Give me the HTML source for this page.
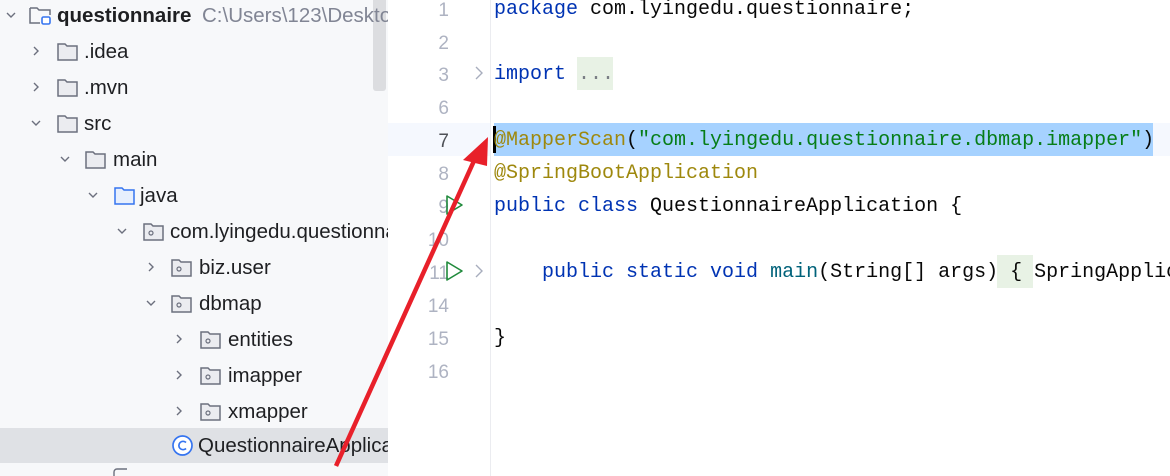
<!DOCTYPE html>
<html><head><meta charset="utf-8"><style>
*{margin:0;padding:0;box-sizing:border-box}
body{width:1170px;height:476px;overflow:hidden;background:#fff;position:relative;font-family:"Liberation Sans",sans-serif}
#tree{position:absolute;left:0;top:0;width:388px;height:476px;background:#f7f8fa;overflow:hidden}
.row{position:absolute;left:0;width:388px;height:36px;font-size:20.5px;color:#1e1f22;white-space:nowrap}
.row span.t{position:absolute;top:7px}
.chev{position:absolute;top:11px;width:14px;height:14px}
.ic{position:absolute;top:8px}
#scroll{position:absolute;left:373px;top:0;width:13px;height:91px;background:#dcdde0;border-radius:0 0 3px 3px}
#clip{position:absolute;left:0;top:0;width:1170px;height:476px;overflow:hidden}
.ln{position:absolute;left:388px;width:61px;text-align:right;font-family:"Liberation Sans",sans-serif;font-size:19px;color:#aeb3c2}
.code{position:absolute;left:494px;font-family:"Liberation Mono",monospace;font-size:20px;white-space:pre;color:#080808;line-height:22px}
.kw{color:#0033b3}.an{color:#9e880d}.st{color:#067d17}
</style></head><body>
<div id="clip">
<div id="tree">
<div id="scroll"></div>
<div class="row" style="top:-3px">
 <svg class="chev" style="left:4px" viewBox="0 0 14 14"><path d="M3 5l4 4 4-4" fill="none" stroke="#6c707e" stroke-width="1.4"/></svg>
 <svg class="ic" style="left:28px;top:7px" width="26" height="24" viewBox="0 0 26 24"><path d="M2 4h7l2 2h11v5M2 4v15h10" fill="none" stroke="#6c707e" stroke-width="1.5"/><rect x="14" y="13" width="8" height="7" rx="1.5" fill="#fff" stroke="#3574f0" stroke-width="1.6"/></svg>
 <span class="t" style="left:57px;font-weight:bold">questionnaire</span><span class="t" style="left:202px;color:#818594">C:\Users\123\Desktop</span></div>
<div class="row" style="top:33px">
 <svg class="chev" style="left:29px" viewBox="0 0 14 14"><path d="M5 3l4 4-4 4" fill="none" stroke="#6c707e" stroke-width="1.4"/></svg>
 <svg class="ic" style="left:56px" width="24" height="22" viewBox="0 0 24 22"><path d="M2 3h7l2 2h10v14H2z" fill="#ebecf0" stroke="#6c707e" stroke-width="1.5"/></svg><span class="t" style="left:84px">.idea</span></div>
<div class="row" style="top:69px">
 <svg class="chev" style="left:29px" viewBox="0 0 14 14"><path d="M5 3l4 4-4 4" fill="none" stroke="#6c707e" stroke-width="1.4"/></svg>
 <svg class="ic" style="left:56px" width="24" height="22" viewBox="0 0 24 22"><path d="M2 3h7l2 2h10v14H2z" fill="#ebecf0" stroke="#6c707e" stroke-width="1.5"/></svg><span class="t" style="left:84px">.mvn</span></div>
<div class="row" style="top:105px">
 <svg class="chev" style="left:29px" viewBox="0 0 14 14"><path d="M3 5l4 4 4-4" fill="none" stroke="#6c707e" stroke-width="1.4"/></svg>
 <svg class="ic" style="left:56px" width="24" height="22" viewBox="0 0 24 22"><path d="M2 3h7l2 2h10v14H2z" fill="#ebecf0" stroke="#6c707e" stroke-width="1.5"/></svg><span class="t" style="left:84px">src</span></div>
<div class="row" style="top:141px">
 <svg class="chev" style="left:58px" viewBox="0 0 14 14"><path d="M3 5l4 4 4-4" fill="none" stroke="#6c707e" stroke-width="1.4"/></svg>
 <svg class="ic" style="left:84px" width="24" height="22" viewBox="0 0 24 22"><path d="M2 3h7l2 2h10v14H2z" fill="#ebecf0" stroke="#6c707e" stroke-width="1.5"/></svg><span class="t" style="left:113px">main</span></div>
<div class="row" style="top:177px">
 <svg class="chev" style="left:86px" viewBox="0 0 14 14"><path d="M3 5l4 4 4-4" fill="none" stroke="#6c707e" stroke-width="1.4"/></svg>
 <svg class="ic" style="left:113px" width="24" height="22" viewBox="0 0 24 22"><path d="M2 3h7l2 2h10v14H2z" fill="#e7effd" stroke="#3574f0" stroke-width="1.5"/></svg><span class="t" style="left:140px">java</span></div>
<div class="row" style="top:213px">
 <svg class="chev" style="left:115px" viewBox="0 0 14 14"><path d="M3 5l4 4 4-4" fill="none" stroke="#6c707e" stroke-width="1.4"/></svg>
 <svg class="ic" style="left:142px" width="24" height="22" viewBox="0 0 24 22"><path d="M2 3h7l2 2h10v14H2z" fill="#ebecf0" stroke="#6c707e" stroke-width="1.5"/><circle cx="9" cy="12" r="2" fill="none" stroke="#6c707e" stroke-width="1.2"/></svg><span class="t" style="left:170px">com.lyingedu.questionnaire</span></div>
<div class="row" style="top:249px">
 <svg class="chev" style="left:144px" viewBox="0 0 14 14"><path d="M5 3l4 4-4 4" fill="none" stroke="#6c707e" stroke-width="1.4"/></svg>
 <svg class="ic" style="left:170px" width="24" height="22" viewBox="0 0 24 22"><path d="M2 3h7l2 2h10v14H2z" fill="#ebecf0" stroke="#6c707e" stroke-width="1.5"/><circle cx="9" cy="12" r="2" fill="none" stroke="#6c707e" stroke-width="1.2"/></svg><span class="t" style="left:199px">biz.user</span></div>
<div class="row" style="top:285px">
 <svg class="chev" style="left:144px" viewBox="0 0 14 14"><path d="M3 5l4 4 4-4" fill="none" stroke="#6c707e" stroke-width="1.4"/></svg>
 <svg class="ic" style="left:170px" width="24" height="22" viewBox="0 0 24 22"><path d="M2 3h7l2 2h10v14H2z" fill="#ebecf0" stroke="#6c707e" stroke-width="1.5"/><circle cx="9" cy="12" r="2" fill="none" stroke="#6c707e" stroke-width="1.2"/></svg><span class="t" style="left:199px">dbmap</span></div>
<div class="row" style="top:321px">
 <svg class="chev" style="left:172px" viewBox="0 0 14 14"><path d="M5 3l4 4-4 4" fill="none" stroke="#6c707e" stroke-width="1.4"/></svg>
 <svg class="ic" style="left:199px" width="24" height="22" viewBox="0 0 24 22"><path d="M2 3h7l2 2h10v14H2z" fill="#ebecf0" stroke="#6c707e" stroke-width="1.5"/><circle cx="9" cy="12" r="2" fill="none" stroke="#6c707e" stroke-width="1.2"/></svg><span class="t" style="left:228px">entities</span></div>
<div class="row" style="top:357px">
 <svg class="chev" style="left:172px" viewBox="0 0 14 14"><path d="M5 3l4 4-4 4" fill="none" stroke="#6c707e" stroke-width="1.4"/></svg>
 <svg class="ic" style="left:199px" width="24" height="22" viewBox="0 0 24 22"><path d="M2 3h7l2 2h10v14H2z" fill="#ebecf0" stroke="#6c707e" stroke-width="1.5"/><circle cx="9" cy="12" r="2" fill="none" stroke="#6c707e" stroke-width="1.2"/></svg><span class="t" style="left:228px">imapper</span></div>
<div class="row" style="top:393px">
 <svg class="chev" style="left:172px" viewBox="0 0 14 14"><path d="M5 3l4 4-4 4" fill="none" stroke="#6c707e" stroke-width="1.4"/></svg>
 <svg class="ic" style="left:199px" width="24" height="22" viewBox="0 0 24 22"><path d="M2 3h7l2 2h10v14H2z" fill="#ebecf0" stroke="#6c707e" stroke-width="1.5"/><circle cx="9" cy="12" r="2" fill="none" stroke="#6c707e" stroke-width="1.2"/></svg><span class="t" style="left:228px">xmapper</span></div>
<div class="row" style="top:428px;height:35px;background:#dfe1e5">
 <svg class="ic" style="left:171px;top:6px" width="23" height="23" viewBox="0 0 23 23"><circle cx="11.5" cy="11.5" r="9.5" fill="#fff" stroke="#3574f0" stroke-width="1.7"/><path d="M15 8.5a4.2 4.2 0 1 0 0 6" fill="none" stroke="#3574f0" stroke-width="1.7"/></svg><span class="t" style="left:198px;top:6px">QuestionnaireApplication</span></div>
<svg style="position:absolute;left:112px;top:467px" width="20" height="10"><path d="M2 10V5a3 3 0 0 1 3-3h10" fill="none" stroke="#6c707e" stroke-width="1.4"/></svg>
</div>
<div style="position:absolute;left:490px;top:0;width:1px;height:476px;background:#ebecf0"></div>
<div style="position:absolute;left:388px;top:123px;width:102px;height:33px;background:#f5f8fe"></div>
<div style="position:absolute;left:1153px;top:123px;width:17px;height:33px;background:#f5f8fe"></div>
<div style="position:absolute;left:494px;top:123px;width:659px;height:33px;background:#a6d2ff"></div>
<div style="position:absolute;left:493px;top:126px;width:3px;height:27px;background:#000"></div>
<div style="position:absolute;left:577px;top:57px;width:36px;height:33px;background:#e8f2e5"></div>
<div style="position:absolute;left:997px;top:255px;width:36px;height:33px;background:#e8f2e5"></div>

<div class="ln" style="top:0px">1</div>
<div class="ln" style="top:33px">2</div>
<div class="ln" style="top:65px">3</div>
<div class="ln" style="top:98px">6</div>
<div class="ln" style="top:131px;color:#4e5157">7</div>
<div class="ln" style="top:164px">8</div>
<div class="ln" style="top:197px">9</div>
<div class="ln" style="top:230px">10</div>
<div class="ln" style="top:263px">11</div>
<div class="ln" style="top:296px">14</div>
<div class="ln" style="top:329px">15</div>
<div class="ln" style="top:362px">16</div>
<svg style="position:absolute;left:472px;top:65px" width="14" height="16"><path d="M4 2l6 6-6 6" fill="none" stroke="#a8adbd" stroke-width="1.4"/></svg>
<svg style="position:absolute;left:472px;top:263px" width="14" height="16"><path d="M4 2l6 6-6 6" fill="none" stroke="#a8adbd" stroke-width="1.4"/></svg>
<svg style="position:absolute;left:444px;top:194px" width="22" height="22"><path d="M3 2l15 9-15 9z" fill="none" stroke="#208a3c" stroke-width="1.6" stroke-linejoin="round"/></svg>
<svg style="position:absolute;left:444px;top:260px" width="22" height="22"><path d="M3 2l15 9-15 9z" fill="none" stroke="#208a3c" stroke-width="1.6" stroke-linejoin="round"/></svg>

<div class="code" style="top:-1px"><span class="kw">package</span> com.lyingedu.questionnaire;</div>
<div class="code" style="top:64px"><span class="kw">import</span> <span style="color:#7a7e85">...</span></div>
<div class="code" style="top:130px"><span class="an">@MapperScan</span>(<span class="st">"com.lyingedu.questionnaire.dbmap.imapper"</span>)</div>
<div class="code" style="top:163px"><span class="an">@SpringBootApplication</span></div>
<div class="code" style="top:196px"><span class="kw">public class</span> QuestionnaireApplication {</div>
<div class="code" style="top:262px">    <span class="kw">public static void</span> <span style="color:#00627a">main</span>(String[] args) { SpringApplic</div>
<div class="code" style="top:328px">}</div>

<svg style="position:absolute;left:0;top:0" width="1170" height="476"><path d="M336 466L478 152" stroke="#e8202a" stroke-width="4.5" fill="none"/><path d="M488 137L463 160L487 166Z" fill="#e8202a"/></svg>
</div>
</body></html>
